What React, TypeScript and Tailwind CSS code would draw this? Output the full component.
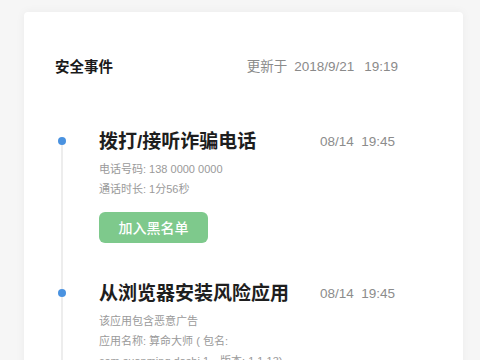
import React from "react";

const font = { fontFamily: '"Liberation Sans", "Noto Sans CJK SC", sans-serif' };

function Event({
  title,
  time,
  lines,
  first,
  children,
}: {
  title: string;
  time: string;
  lines: string[];
  first?: boolean;
  children?: React.ReactNode;
}) {
  return (
    <div className="flex">
      <div className="w-[75px] shrink-0 pl-[34px]">
        <div className="flex h-full w-[8px] flex-col items-center">
          <div className={`h-[8px] w-[2px] ${first ? "" : "bg-[#ededed]"}`} />
          <div className="h-[8px] w-[8px] rounded-full bg-[#4a92e0]" />
          <div className="w-[2px] flex-1 bg-[#ededed]" />
        </div>
      </div>
      <div className="flex-1 pb-[38px] pr-[68px]">
        <div className="flex items-center justify-between">
          <div className="text-[19px] font-bold leading-[26px] text-[#1e1e1e]">{title}</div>
          <div className="whitespace-pre text-[13.5px] leading-[26px] text-[#8c8c8c]">{time}</div>
        </div>
        <div className="mt-[4px] text-[11px] leading-[20px] text-[#9a9a9a]">
          {lines.map((l, i) => (
            <div key={i}>{l}</div>
          ))}
        </div>
        {children}
      </div>
    </div>
  );
}

export default function App() {
  return (
    <div className="h-[360px] w-[480px] overflow-hidden bg-[#f6f6f6] pl-[24px] pr-[17px] pt-[12px]" style={font}>
      <div className="h-[400px] rounded-[4px] bg-white shadow-[0_0_10px_rgba(0,0,0,0.05)]">
        <div className="flex items-center justify-between pl-[31px] pr-[65px] pt-[45px]">
          <div className="text-[14.5px] font-bold leading-[20px] text-[#1a1a1a]">安全事件</div>
          <div className="flex text-[13.5px] leading-[20px] text-[#8a8a8a]">
            <span>更新于</span>
            <span className="ml-[7px]">2018/9/21</span>
            <span className="ml-[10px]">19:19</span>
          </div>
        </div>
        <div className="mt-[52px]">
          <Event
            first
            title="拨打/接听诈骗电话"
            time={"08/14  19:45"}
            lines={["电话号码: 138 0000 0000", "通话时长: 1分56秒"]}
          >
            <button className="mt-[13px] flex h-[31px] w-[109px] items-center justify-center rounded-[6px] bg-[#7ec98c] text-[14px] font-medium leading-none text-white">
              加入黑名单
            </button>
          </Event>
          <Event
            title="从浏览器安装风险应用"
            time={"08/14  19:45"}
            lines={["该应用包含恶意广告", "应用名称: 算命大师 ( 包名:", "com.suanming.dashi.1，版本: 1.1.13)"]}
          />
        </div>
      </div>
    </div>
  );
}
